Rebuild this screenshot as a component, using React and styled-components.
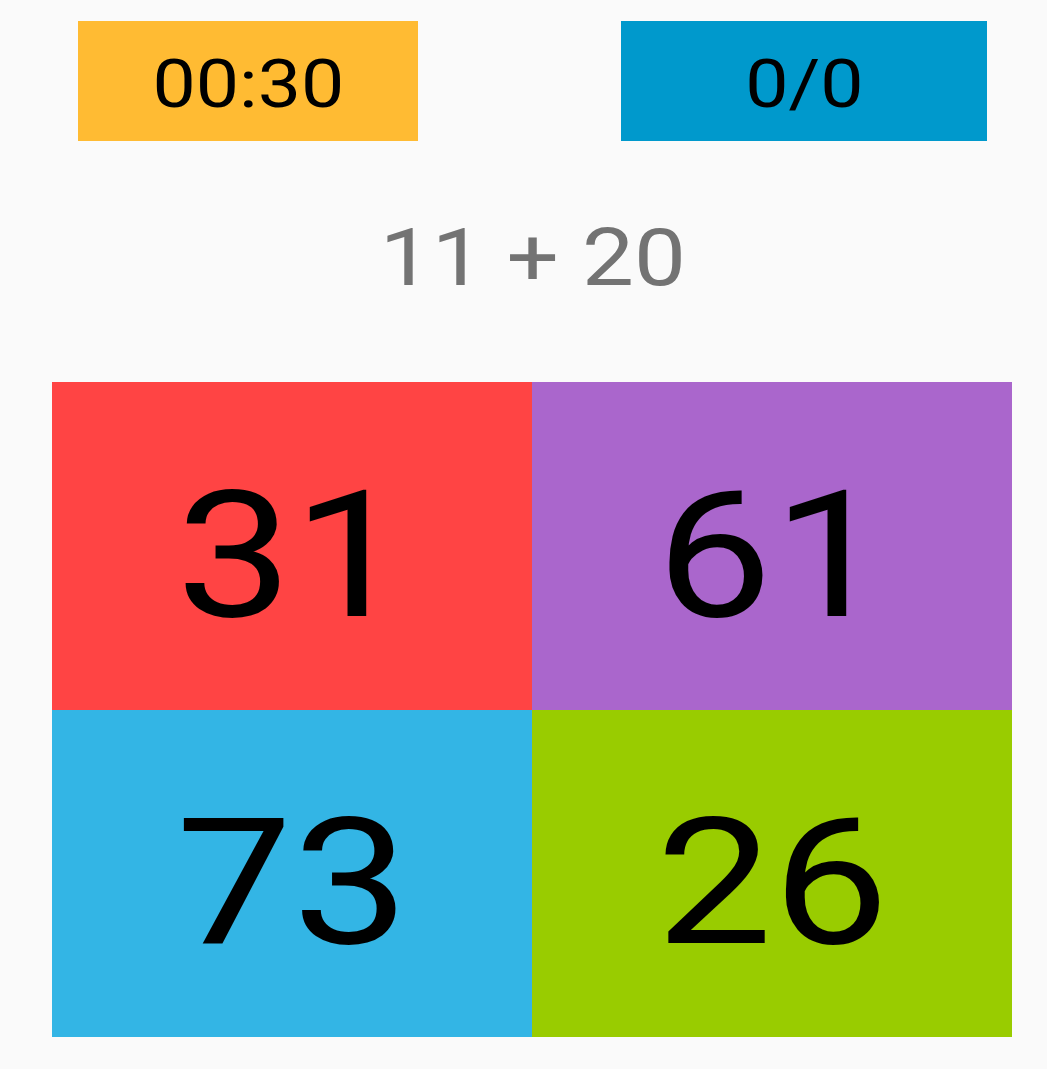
import React from 'react';
import styled, { createGlobalStyle } from 'styled-components';

const GlobalStyle = createGlobalStyle`
  html, body {
    margin: 0;
    padding: 0;
    background: #fafafa;
  }
  body {
    font-family: Roboto, "Liberation Sans", sans-serif;
  }
`;

const Page = styled.div`
  width: 1047px;
  height: 1069px;
  box-sizing: border-box;
  padding: 21px 35px 0 52px;
  display: flex;
  flex-direction: column;
`;

const Header = styled.div`
  display: flex;
  align-items: center;
  padding-left: 26px;
  gap: 203px;
`;

const Badge = styled.div`
  width: ${p => p.$width}px;
  height: 120px;
  background: ${p => p.$bg};
  display: flex;
  align-items: center;
  justify-content: center;
  color: #000;
  font-size: 67px;
  line-height: 1;
  padding-top: 7px;
  box-sizing: border-box;
`;

const Stretch = styled.span`
  display: inline-block;
  transform: scaleX(${p => p.$x || 1.17});
`;

const Question = styled.div`
  height: 241px;
  display: flex;
  align-items: center;
  justify-content: center;
  padding-left: 2px;
  padding-bottom: 6px;
  box-sizing: border-box;
  color: #737373;
  font-size: 79px;
  line-height: 1;
`;

const Grid = styled.div`
  display: grid;
  grid-template-columns: 480px 480px;
  grid-template-rows: 328px 327px;
`;

const Answer = styled.div`
  background: ${p => p.$bg};
  display: flex;
  align-items: center;
  justify-content: center;
  padding-top: 18px;
  box-sizing: border-box;
  color: #000;
  font-size: 177px;
  line-height: 1;
  cursor: pointer;
`;

const answers = [
  { value: 31, color: '#ff4444' },
  { value: 61, color: '#aa66cc' },
  { value: 73, color: '#33b5e5' },
  { value: 26, color: '#99cc00' },
];

const App = () => {
  return (
    <>
      <GlobalStyle />
      <Page>
        <Header>
          <Badge $width={340} $bg="#ffbb33"><Stretch $x={1.15}>00:30</Stretch></Badge>
          <Badge $width={366} $bg="#0099cc"><Stretch $x={1.15}>0/0</Stretch></Badge>
        </Header>
        <Question><Stretch>11 + 20</Stretch></Question>
        <Grid>
          {answers.map(a => (
            <Answer key={a.value} $bg={a.color}><Stretch>{a.value}</Stretch></Answer>
          ))}
        </Grid>
      </Page>
    </>
  );
};

export default App;
